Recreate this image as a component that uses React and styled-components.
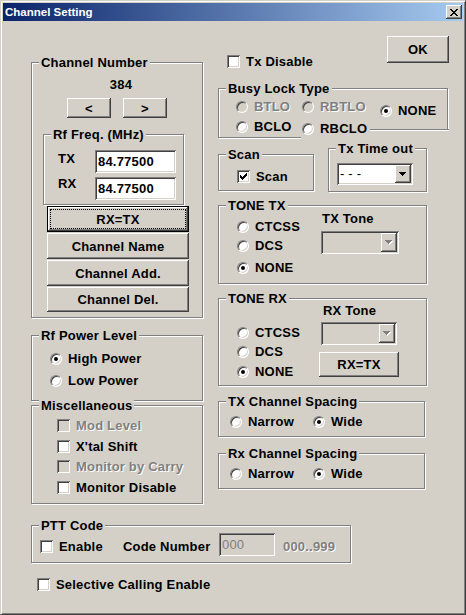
import React from 'react';
import styled, { createGlobalStyle } from 'styled-components';

const GlobalStyle = createGlobalStyle`
  html, body {
    margin: 0;
    padding: 0;
    background: #d4d0c8;
  }
  body {
    width: 466px;
    height: 615px;
    overflow: hidden;
    font-family: "Liberation Sans", Arial, sans-serif;
    font-size: 13px;
    font-weight: bold;
    letter-spacing: 0.2px;
    color: #000;
  }
  * {
    box-sizing: border-box;
  }
`;

const Window = styled.div`
  width: 466px;
  height: 615px;
  display: flex;
  flex-direction: column;
  padding: 2px;
  background: #d4d0c8;
  border: 1px solid;
  border-color: #d4d0c8 #404040 #404040 #d4d0c8;
  box-shadow: inset 1px 1px 0 #fff, inset -1px -1px 0 #808080;
`;

const TitleBar = styled.div`
  flex: none;
  height: 18px;
  display: flex;
  align-items: center;
  padding: 0 1px 0 2px;
  background: linear-gradient(to right, #0a246a, #a6caf0);
  color: #fff;
  font-size: 11.5px;
  letter-spacing: 0;
  line-height: 18px;
`;

const TitleText = styled.span`
  flex: 1;
`;

const Bevel = `
  box-shadow: inset -1px -1px 0 #404040, inset 1px 1px 0 #fff, inset -2px -2px 0 #808080;
`;

const CloseButton = styled.button`
  width: 16px;
  height: 14px;
  padding: 0;
  border: none;
  background: #d4d0c8;
  display: flex;
  align-items: center;
  justify-content: center;
  ${Bevel}
`;

const Body = styled.div`
  flex: 1;
  display: flex;
  flex-direction: column;
  align-items: flex-start;
  padding: 15px 0 0 28px;
`;

const MainRow = styled.div`
  display: flex;
  align-items: flex-start;
  gap: 15px;
`;

const LeftCol = styled.div`
  width: 172px;
  margin-top: 26px;
  display: flex;
  flex-direction: column;
`;

const RightCol = styled.div`
  width: 231px;
  display: flex;
  flex-direction: column;
  align-items: flex-start;
`;

const Group = styled.div`
  position: relative;
  flex: none;
  width: ${p => p.$w}px;
  height: ${p => p.$h}px;
  margin: ${p => p.$mt || 0}px 0 0 ${p => p.$ml || 0}px;
  border: 1px solid #808080;
  box-shadow: inset 1px 1px 0 #fff, 1px 1px 0 #fff;
`;

const BusyGroup = styled(Group)`
  &::after {
    content: '';
    position: absolute;
    right: -2px;
    bottom: -2px;
    width: 79px;
    height: 9px;
    background: #d4d0c8;
    border-top: 1px solid #808080;
    box-shadow: inset 0 1px 0 #fff;
  }
`;

const Legend = styled.span`
  position: absolute;
  top: -8px;
  left: 7px;
  padding: 0 2px;
  line-height: 15px;
  white-space: nowrap;
  background: #d4d0c8;
`;

const Button = styled.button`
  position: relative;
  flex: none;
  width: ${p => p.$w}px;
  height: ${p => p.$h}px;
  margin: ${p => p.$mt || 0}px 0 0 ${p => (p.$push ? 'auto' : `${p.$ml || 0}px`)};
  padding: 0;
  border: ${p => (p.$default ? '1px solid #000' : 'none')};
  background: #d4d0c8;
  font: inherit;
  letter-spacing: inherit;
  color: #000;
  ${Bevel}
  ${p =>
    p.$default &&
    `&::after {
      content: '';
      position: absolute;
      inset: 2px;
      border: 1px dotted #000;
    }`}
`;

const Sunken = `
  box-shadow: inset 1px 1px 0 #808080, inset -1px -1px 0 #fff, inset 2px 2px 0 #404040, inset -2px -2px 0 #d4d0c8;
`;

const Edit = styled.input`
  flex: none;
  width: ${p => p.$w}px;
  height: ${p => p.$h || 23}px;
  margin: 0;
  padding: 0 0 0 3px;
  border: none;
  outline: none;
  font: inherit;
  letter-spacing: inherit;
  font-weight: ${p => (p.disabled ? 'normal' : 'bold')};
  color: ${p => (p.disabled ? '#808080' : '#000')};
  background: ${p => (p.disabled ? '#d4d0c8' : '#fff')};
  ${Sunken}
`;

const Option = styled.div`
  flex: none;
  display: flex;
  align-items: center;
  gap: 6px;
  height: 15px;
  line-height: 15px;
  width: ${p => (p.$w ? `${p.$w}px` : 'auto')};
  margin: ${p => p.$mt || 0}px 0 0 ${p => p.$ml || 0}px;
  white-space: nowrap;
  color: ${p => (p.$disabled ? '#808080' : '#000')};
  text-shadow: ${p => (p.$disabled ? '1px 1px 0 #fff' : 'none')};
`;

const CoverOption = styled(Option)`
  height: 18px;
  align-items: flex-start;
  margin-left: -1px;
  padding: 0 2px 3px 1px;
  background: #d4d0c8;
  & > span {
    margin-top: 1.5px;
  }
`;

const Radio = styled.span`
  flex: none;
  width: 12px;
  height: 12px;
  border-radius: 50%;
  border: 1px solid;
  border-color: #808080 #fff #fff #808080;
  background: ${p => (p.$disabled ? '#d4d0c8' : '#fff')};
  box-shadow: inset 1px 1px 0 #404040, inset -1px -1px 0 #d4d0c8;
  display: flex;
  align-items: center;
  justify-content: center;
  &::after {
    content: '';
    width: 4px;
    height: 4px;
    border-radius: 50%;
    background: ${p => (p.$checked ? '#000' : 'transparent')};
  }
`;

const Box = styled.span`
  flex: none;
  width: 13px;
  height: 13px;
  display: flex;
  align-items: center;
  justify-content: center;
  background: ${p => (p.$disabled ? '#d4d0c8' : '#fff')};
  ${Sunken}
`;

const ComboBox = styled.div`
  flex: none;
  width: ${p => p.$w}px;
  height: ${p => p.$h || 22}px;
  margin: ${p => p.$mt || 0}px 0 0 ${p => p.$ml || 0}px;
  padding: 2px;
  display: flex;
  align-items: stretch;
  background: ${p => (p.$disabled ? '#d4d0c8' : '#fff')};
  ${Sunken}
`;

const ComboText = styled.span`
  flex: 1;
  padding-left: 1px;
  font-weight: normal;
  line-height: 17px;
  white-space: pre;
`;

const ComboArrow = styled.span`
  flex: none;
  width: 16px;
  display: flex;
  align-items: center;
  justify-content: center;
  background: #d4d0c8;
  ${Bevel}
`;

const ChannelValue = styled.div`
  margin-top: 14px;
  padding-left: 8px;
  line-height: 15px;
  text-align: center;
`;

const ArrowRow = styled.div`
  display: flex;
  gap: 12px;
  margin-top: 6px;
  padding-left: 35px;
`;

const FreqRow = styled.div`
  display: flex;
  align-items: flex-start;
  margin-top: ${p => p.$mt}px;
  padding-left: 14px;
`;

const FreqLabel = styled.span`
  width: 37px;
  line-height: 15px;
  margin-top: ${p => p.$mt || 0}px;
`;

const ButtonStack = styled.div`
  display: flex;
  flex-direction: column;
  gap: 1px;
  margin: 1px 0 0 15px;
`;

const OptionList = styled.div`
  display: flex;
  flex-direction: column;
  padding-left: ${p => p.$pl}px;
`;

const TopRow = styled.div`
  width: 100%;
  height: 27px;
  display: flex;
  align-items: flex-start;
`;

const BusyGrid = styled.div`
  display: grid;
  grid-template-columns: 66px 78px auto;
  grid-template-rows: 15px 15px;
  row-gap: 5px;
  align-items: start;
  padding: 10px 0 0 17px;
`;

const TimeRow = styled.div`
  display: flex;
  align-items: flex-start;
  gap: 14px;
  margin-top: 10px;
`;

const ToneBody = styled.div`
  display: flex;
  padding-left: 18px;
`;

const RadioCol = styled.div`
  width: 84px;
  display: flex;
  flex-direction: column;
`;

const ToneCol = styled.div`
  display: flex;
  flex-direction: column;
  align-items: flex-start;
`;

const ToneLabel = styled.div`
  line-height: 15px;
  margin: ${p => p.$mt}px 0 0 ${p => p.$ml}px;
`;

const SpacingRow = styled.div`
  display: grid;
  grid-template-columns: 83px auto;
  padding: 12px 0 0 11px;
`;

const PttRow = styled.div`
  display: flex;
  align-items: flex-start;
  padding: 7px 0 0 8px;
`;

const Caption = styled.span`
  flex: none;
  width: ${p => (p.$w ? `${p.$w}px` : 'auto')};
  margin: ${p => p.$mt || 0}px 0 0 ${p => p.$ml || 0}px;
  line-height: 15px;
  white-space: nowrap;
  color: ${p => (p.$disabled ? '#808080' : '#000')};
  text-shadow: ${p => (p.$disabled ? '1px 1px 0 #fff' : 'none')};
`;

function CloseGlyph() {
  return (
    <svg width="8" height="7" viewBox="0 0 8 7" shapeRendering="crispEdges">
      <path
        fill="#000"
        d="M0 0h2v1H0zM6 0h2v1H6zM1 1h2v1H1zM5 1h2v1H5zM2 2h4v1H2zM3 3h2v1H3zM2 4h4v1H2zM1 5h2v1H1zM5 5h2v1H5zM0 6h2v1H0zM6 6h2v1H6z"
      />
    </svg>
  );
}

function Tick() {
  return (
    <svg width="7" height="7" viewBox="0 0 7 7" shapeRendering="crispEdges">
      <path
        fill="#000"
        d="M6 0h1v1H6zM5 1h2v1H5zM0 2h1v1H0zM4 2h3v1H4zM0 3h2v1H0zM3 3h3v1H3zM0 4h5v1H0zM1 5h3v1H1zM2 6h1v1H2z"
      />
    </svg>
  );
}

function Triangle({ disabled }) {
  const d = 'M0 0h7v1H0zM1 1h5v1H1zM2 2h3v1H2zM3 3h1v1H3z';
  return (
    <svg width="8" height="5" viewBox="0 0 8 5" shapeRendering="crispEdges">
      {disabled && <path fill="#fff" d={d} transform="translate(1 1)" />}
      <path fill={disabled ? '#808080' : '#000'} d={d} />
    </svg>
  );
}

function CheckOption({ checked, disabled, children, ...rest }) {
  return (
    <Option $disabled={disabled} {...rest}>
      <Box $disabled={disabled}>{checked && <Tick />}</Box>
      {children}
    </Option>
  );
}

function RadioOption({ checked, disabled, children, ...rest }) {
  return (
    <Option $disabled={disabled} {...rest}>
      <Radio $checked={checked} $disabled={disabled} />
      {children}
    </Option>
  );
}

function Combo({ disabled, children, ...rest }) {
  return (
    <ComboBox $disabled={disabled} {...rest}>
      <ComboText>{children}</ComboText>
      <ComboArrow>
        <Triangle disabled={disabled} />
      </ComboArrow>
    </ComboBox>
  );
}

export default function App() {
  return (
    <>
      <GlobalStyle />
      <Window>
        <TitleBar>
          <TitleText>Channel Setting</TitleText>
          <CloseButton>
            <CloseGlyph />
          </CloseButton>
        </TitleBar>
        <Body>
          <MainRow>
            <LeftCol>
              <Group $w={172} $h={256}>
                <Legend>Channel Number</Legend>
                <ChannelValue>384</ChannelValue>
                <ArrowRow>
                  <Button $w={44} $h={20}>&lt;</Button>
                  <Button $w={44} $h={20}>&gt;</Button>
                </ArrowRow>
                <Group $w={141} $h={71} $mt={16} $ml={11}>
                  <Legend>Rf Freq. (MHz)</Legend>
                  <FreqRow $mt={15}>
                    <FreqLabel $mt={1}>TX</FreqLabel>
                    <Edit $w={81} readOnly value="84.77500" />
                  </FreqRow>
                  <FreqRow $mt={4}>
                    <FreqLabel $mt={-1}>RX</FreqLabel>
                    <Edit $w={81} readOnly value="84.77500" />
                  </FreqRow>
                </Group>
                <ButtonStack>
                  <Button $w={142} $h={26} $default>RX=TX</Button>
                  <Button $w={142} $h={26}>Channel Name</Button>
                  <Button $w={142} $h={26}>Channel Add.</Button>
                  <Button $w={142} $h={25}>Channel Del.</Button>
                </ButtonStack>
              </Group>

              <Group $w={172} $h={66} $mt={17}>
                <Legend>Rf Power Level</Legend>
                <OptionList $pl={18}>
                  <RadioOption checked $mt={15}>High Power</RadioOption>
                  <RadioOption $mt={7}>Low Power</RadioOption>
                </OptionList>
              </Group>

              <Group $w={172} $h={99} $mt={4}>
                <Legend>Miscellaneous</Legend>
                <OptionList $pl={25}>
                  <CheckOption disabled $mt={12}>Mod Level</CheckOption>
                  <CheckOption $mt={5.5}>X'tal Shift</CheckOption>
                  <CheckOption disabled $mt={5.5}>Monitor by Carry</CheckOption>
                  <CheckOption $mt={5.5}>Monitor Disable</CheckOption>
                </OptionList>
              </Group>
            </LeftCol>

            <RightCol>
              <TopRow>
                <CheckOption $mt={18} $ml={9}>Tx Disable</CheckOption>
                <Button $w={62} $h={27} $push>OK</Button>
              </TopRow>

              <BusyGroup $w={230} $h={50} $mt={25}>
                <Legend>Busy Lock Type</Legend>
                <BusyGrid>
                  <RadioOption disabled>BTLO</RadioOption>
                  <RadioOption disabled>RBTLO</RadioOption>
                  <RadioOption checked $mt={4}>NONE</RadioOption>
                  <RadioOption>BCLO</RadioOption>
                  <CoverOption $mt={2}>
                    <Radio />
                    RBCLO
                  </CoverOption>
                </BusyGrid>
              </BusyGroup>

              <TimeRow>
                <Group $w={96} $h={37} $mt={6}>
                  <Legend>Scan</Legend>
                  <CheckOption checked $mt={14} $ml={18}>Scan</CheckOption>
                </Group>
                <Group $w={99} $h={44}>
                  <Legend>Tx Time out</Legend>
                  <Combo $w={76} $h={22} $mt={14} $ml={8}>- - -</Combo>
                </Group>
              </TimeRow>

              <Group $w={209} $h={79} $mt={13}>
                <Legend>TONE TX</Legend>
                <ToneBody>
                  <RadioCol>
                    <RadioOption $mt={13}>CTCSS</RadioOption>
                    <RadioOption $mt={4}>DCS</RadioOption>
                    <RadioOption checked $mt={7}>NONE</RadioOption>
                  </RadioCol>
                  <ToneCol>
                    <ToneLabel $mt={5} $ml={1}>TX Tone</ToneLabel>
                    <Combo disabled $w={78} $h={23} $mt={5} />
                  </ToneCol>
                </ToneBody>
              </Group>

              <Group $w={209} $h={88} $mt={14}>
                <Legend>TONE RX</Legend>
                <ToneBody>
                  <RadioCol>
                    <RadioOption $mt={26}>CTCSS</RadioOption>
                    <RadioOption $mt={4}>DCS</RadioOption>
                    <RadioOption checked $mt={5}>NONE</RadioOption>
                  </RadioCol>
                  <ToneCol>
                    <ToneLabel $mt={4} $ml={2}>RX Tone</ToneLabel>
                    <Combo disabled $w={76} $h={23} $mt={4} />
                    <Button $w={80} $h={25} $mt={7} $ml={-2}>RX=TX</Button>
                  </ToneCol>
                </ToneBody>
              </Group>

              <Group $w={207} $h={36} $mt={15}>
                <Legend>TX Channel Spacing</Legend>
                <SpacingRow>
                  <RadioOption>Narrow</RadioOption>
                  <RadioOption checked>Wide</RadioOption>
                </SpacingRow>
              </Group>

              <Group $w={207} $h={36} $mt={16}>
                <Legend>Rx Channel Spacing</Legend>
                <SpacingRow>
                  <RadioOption>Narrow</RadioOption>
                  <RadioOption checked>Wide</RadioOption>
                </SpacingRow>
              </Group>
            </RightCol>
          </MainRow>

          <Group $w={320} $h={38} $mt={21}>
            <Legend>PTT Code</Legend>
            <PttRow>
              <CheckOption $w={83} $mt={6}>Enable</CheckOption>
              <Caption $w={96} $mt={6}>Code Number</Caption>
              <Edit $w={56} $h={23} disabled value="000" readOnly />
              <Caption $disabled $mt={6} $ml={8}>000..999</Caption>
            </PttRow>
          </Group>

          <CheckOption $mt={14} $ml={6}>Selective Calling Enable</CheckOption>
        </Body>
      </Window>
    </>
  );
}
